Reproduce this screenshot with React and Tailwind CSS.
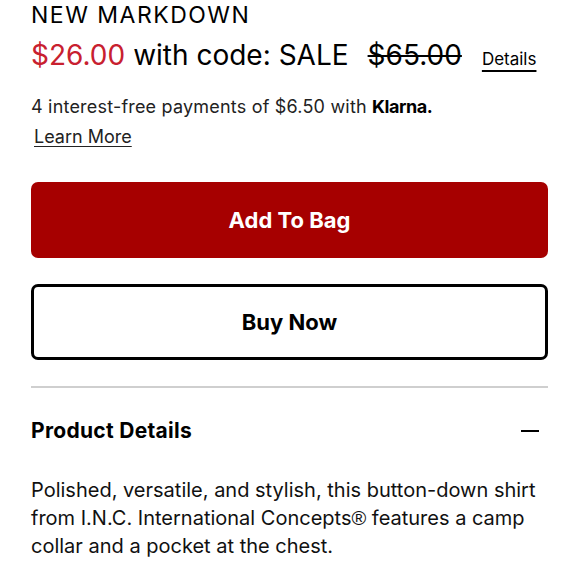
import React from "react";

// ====================================================================
// PriceBlock
// ====================================================================
const PriceBlock = () => (
  <div>
    <p className="pt-[2px] text-[23px] leading-[26px] tracking-[1.5px] text-black">
      NEW MARKDOWN
    </p>
    <div className="mt-[10px] flex items-baseline leading-[34px]">
      <span className="text-[28px] text-[#c8202f]">$26.00</span>
      <span className="ml-[8px] text-[28px] text-black">with code: SALE</span>
      <span className="ml-[19px] text-[28px] text-black line-through decoration-[2px]">
        $65.00
      </span>
      <a
        href="#"
        className="ml-[20px] text-[17px] text-black underline decoration-[2px] underline-offset-[5px]">
        Details
      </a>
    </div>
    <p className="mt-[19px] text-[18px] leading-[24px] tracking-[0.2px] text-[#222]">
      4 interest-free payments of $6.50 with{" "}
      <span className="font-bold text-black tracking-tight">Klarna.</span>
    </p>
    <a
      href="#"
      className="mt-[6px] ml-[3px] inline-block text-[18px] leading-[24px] text-[#222] underline decoration-[1px] underline-offset-[3px]">
      Learn More
    </a>
  </div>
);

// ====================================================================
// App
// ====================================================================
export default function App() {
  return (
    <div
      className="min-h-screen bg-white pl-[31px] pr-[32px]"
      style={{ fontFamily: "Inter, 'Liberation Sans', sans-serif" }}>
      <PriceBlock />

      {/* Actions */}
      <div className="mt-[33px] flex flex-col gap-[26px]">
        <button className="h-[76px] w-full rounded-[7px] bg-[#a60000] text-[22px] font-bold text-white">
          Add To Bag
        </button>
        <button className="h-[76px] w-full rounded-[7px] border-[3px] border-black bg-white text-[22px] font-bold text-black">
          Buy Now
        </button>
      </div>

      <div className="mt-[26px] h-[2px] bg-[#cfcfcf]" />

      {/* Product Details */}
      <div className="mt-[29px] flex items-center justify-between">
        <h2 className="text-[21px] leading-[28px] tracking-[0.3px] font-bold text-black">
          Product Details
        </h2>
        <span className="mr-[9px] block h-[2px] w-[18px] bg-black" />
      </div>
      <p className="mt-[31px] text-[20px] leading-[28px] text-[#111]">
        Polished, versatile, and stylish, this button-down shirt from I.N.C.
        International Concepts
        <span style={{ fontFamily: "'Liberation Sans', sans-serif" }}>®</span>{" "}
        features a camp collar and a pocket at the chest.
      </p>
    </div>
  );
}
